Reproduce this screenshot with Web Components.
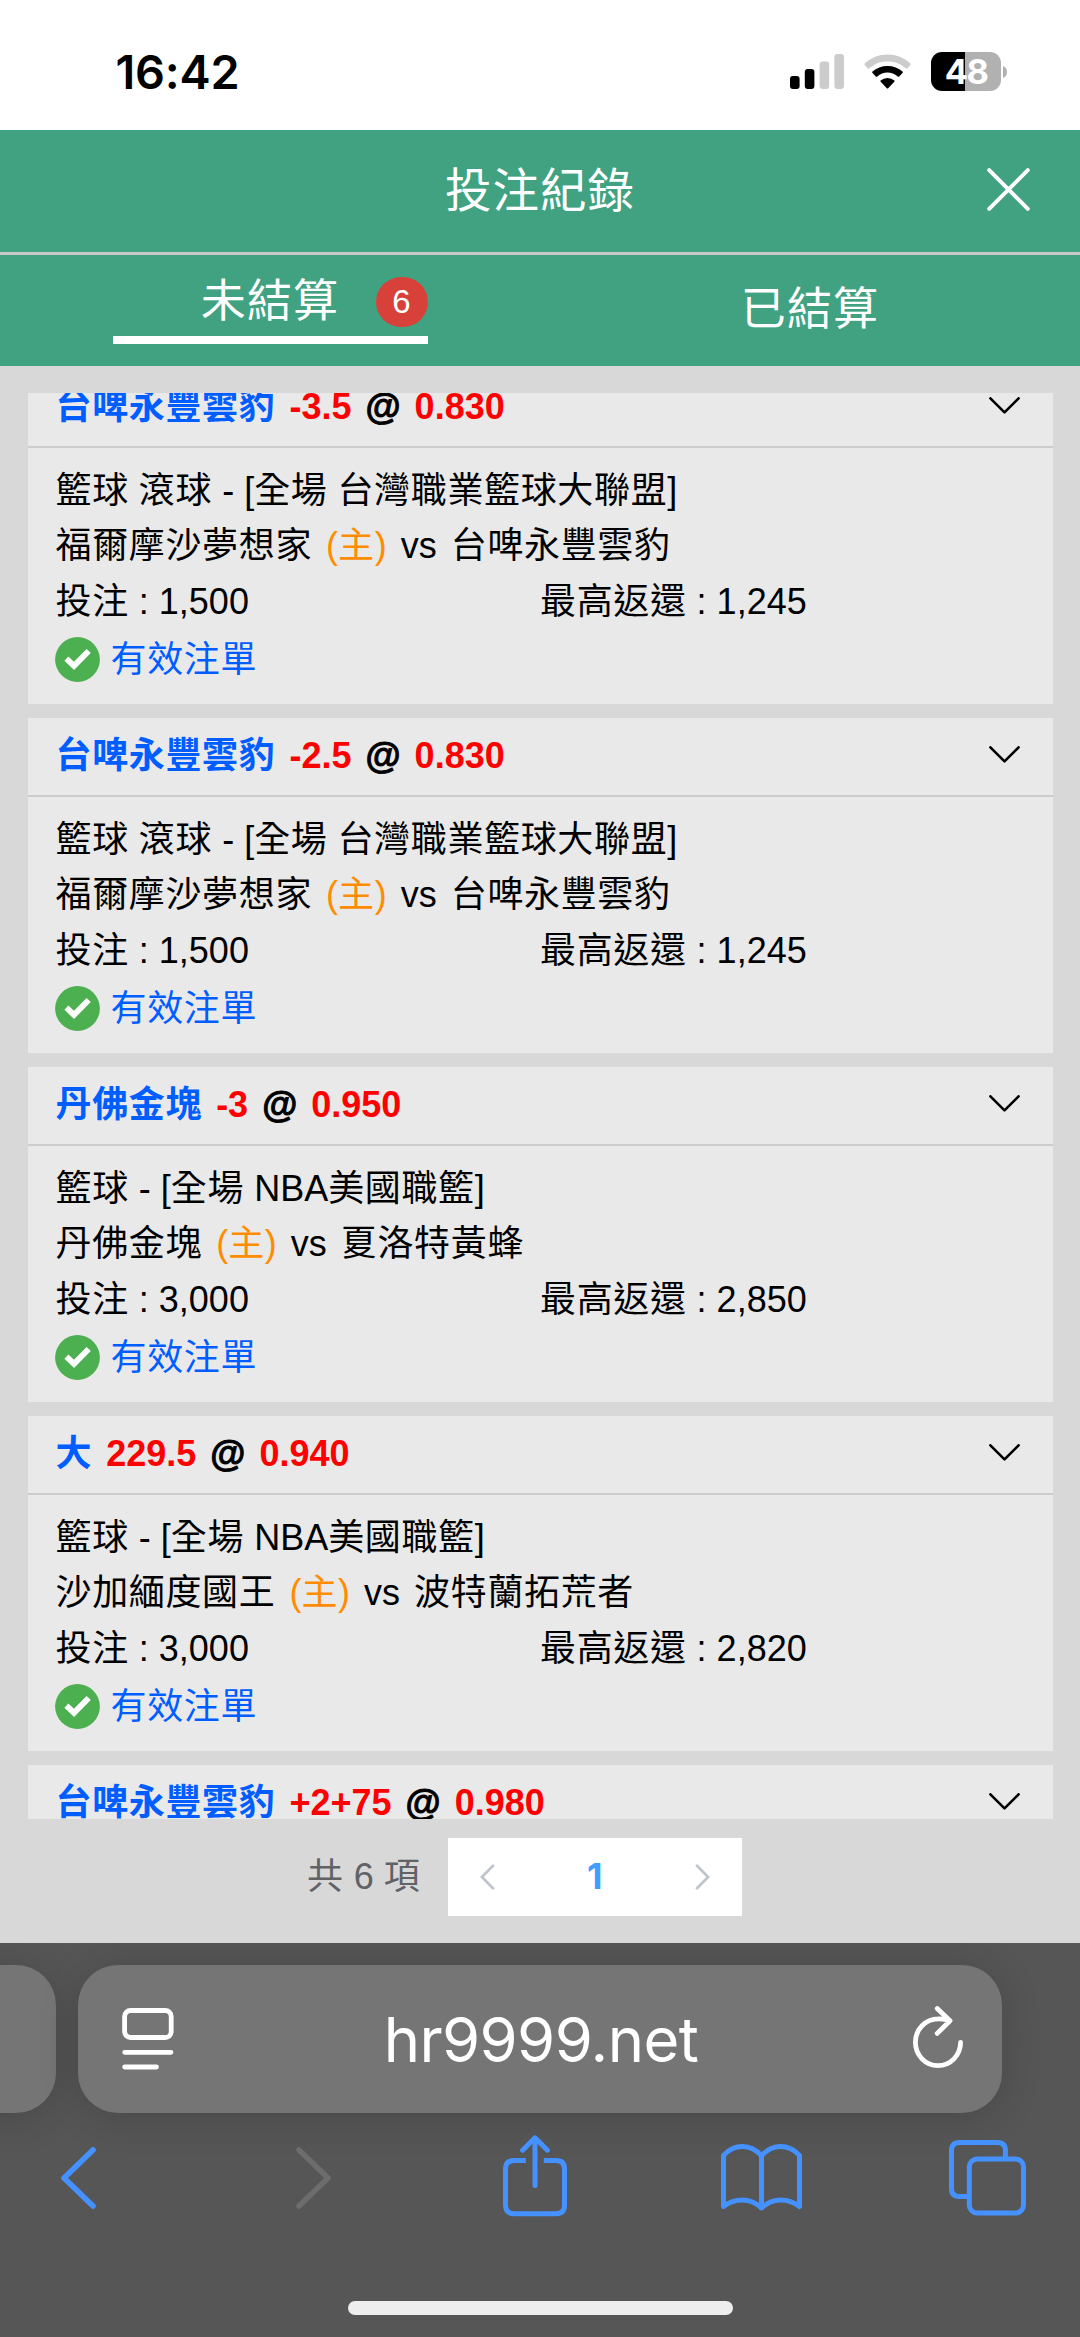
<!DOCTYPE html>
<html lang="zh-Hant">
<head>
<meta charset="utf-8">
<title>投注紀錄</title>
<style>
html,body{margin:0;padding:0}
body{width:1080px;height:2337px;overflow:hidden;background:#d8d8d8;font-family:"Liberation Sans","Noto Sans CJK TC",sans-serif}
</style>
</head>
<body>
<bet-app></bet-app>
<script>
// Wraps runs of Han characters so that only they get the extra tracking.
const han = s => s.replace(/[\u3400-\u9fff]+/g, m => `<span class="h">${m}</span>`);
const base = `<style>*{box-sizing:border-box}svg{display:block;flex:none}.h{letter-spacing:var(--track,.65px)}</style>`;
const define = (name, render) => customElements.define(name, class extends HTMLElement {
  connectedCallback() {
    if (this.shadowRoot) return;
    this.attachShadow({mode: 'open'}).innerHTML = base + render(this);
  }
});

define('status-bar', () => `
<style>
:host{display:flex;height:130px;background:#fff;align-items:flex-start;justify-content:space-between;padding:0 73px 0 115.5px;font-family:Inter,sans-serif}
.time{font-size:46.8px;font-weight:600;line-height:56px;margin-top:44px;letter-spacing:-.2px;color:#000}
.icons{display:flex;align-items:center;margin-top:52px;height:39px}
.sig{margin-right:20px}.wifi{margin-right:20px}
.bat{width:70px;height:39px;border-radius:11px;background:linear-gradient(90deg,#000 34.5px,#b1b1b1 34.5px);color:#fff;font-weight:700;font-size:34.5px;line-height:39px;text-align:center;letter-spacing:-1.6px}
.nub{margin-left:2px}
</style>
<div class="time">16:42</div>
<div class="icons">
<svg class="sig" width="54" height="35" viewBox="0 0 54 35"><rect y="22" width="9.6" height="13" rx="3"/><rect x="14.8" y="15" width="9.6" height="20" rx="3"/><rect x="29.6" y="7.5" width="9.6" height="27.5" rx="3" fill="#ccc"/><rect x="44.4" width="9.6" height="35" rx="3" fill="#ccc"/></svg>
<svg class="wifi" width="47" height="35" viewBox="0 0 47 35"><path d="M0.7 9.6Q0 10.4 .8 11.3L3.8 14.4Q4.5 15 5.3 14.3Q13.2 7.2 23.5 7.2Q33.8 7.2 41.7 14.3Q42.5 15 43.2 14.4L46.2 11.3Q47 10.4 46.3 9.6Q37 .4 23.5 .4Q10 .4 .7 9.6Z" fill="#ccc"/><path d="M8.4 17.6Q7.8 18.4 8.5 19.1L11.8 22.4Q12.5 23 13.3 22.4Q17.8 18.6 23.5 18.6Q29.2 18.6 33.7 22.4Q34.5 23 35.2 22.4L38.5 19.1Q39.2 18.4 38.6 17.6Q32.3 12 23.5 12Q14.7 12 8.4 17.6Z"/><path d="M16.6 26.4Q16 27.1 16.7 27.8L22.8 34.2Q23.5 34.9 24.2 34.2L30.3 27.8Q31 27.1 30.4 26.4Q27.5 23.9 23.5 23.9Q19.5 23.9 16.6 26.4Z"/></svg>
<div class="bat">48</div>
<svg class="nub" width="4" height="12" viewBox="0 0 4 12"><path d="M0 0Q4 1.6 4 6T0 12Z" fill="#b1b1b1"/></svg>
</div>`);

define('page-title', () => `
<style>
:host{display:grid;grid-template-columns:1fr auto 1fr;align-items:center;height:125px;background:#40a280;border-bottom:3px solid #c9c9c9;color:#fff;--track:1px}
.t{grid-column:2;font-size:46.5px;line-height:60px}
svg{justify-self:end;margin-right:50px;margin-bottom:4px}
</style>
<div class="t">${han('投注紀錄')}</div>
<svg width="43" height="43" viewBox="0 0 43 43" fill="none" stroke="#fff" stroke-width="4" stroke-linecap="round"><path d="M2.2 2.2L40.8 40.8M40.8 2.2L2.2 40.8"/></svg>`);

define('tab-item', el => `
<style>
:host{flex:1;display:flex;justify-content:center;color:#fff;--track:1.2px}
.b{position:relative;width:315px;height:${el.hasAttribute('active') ? 88.5 : 110}px;text-align:center;font-size:45px;line-height:60px;${el.hasAttribute('active') ? 'border-bottom:8.5px solid #fff;padding-top:17px' : 'padding-top:25px'}}
.n{position:absolute;right:0;top:22px;width:52px;height:50px;border-radius:26px;background:#d8413a;font-size:33px;line-height:50px}
</style>
<div class="b">${han(el.getAttribute('label'))}${el.hasAttribute('count') ? `<span class="n">${el.getAttribute('count')}</span>` : ''}</div>`);

define('tab-bar', () => `<style>:host{display:flex;height:110.5px;background:#40a280}</style><slot></slot>`);

const chevron = `<svg width="31" height="17" viewBox="0 0 31 17" fill="none" stroke="#000" stroke-width="2.6" stroke-linecap="round" stroke-linejoin="round"><path d="M1.4 1.3L15.5 15.4L29.6 1.3"/></svg>`;
const headCss = `
header{display:flex;align-items:center;justify-content:space-between;height:79px;padding:0 33px 1px 28px;font-weight:700;word-spacing:4px;border-bottom:2.8px solid #ccc}
.p{color:#005dff}.r{color:#f00}.at{-webkit-text-stroke:.9px #000}
header svg{margin-top:-4px}`;
const head = (pick, line, odds) => `<header><div><span class="p">${han(pick)}</span> <span class="r">${line}</span> <span class="at">@</span> <span class="r">${odds}</span></div>${chevron}</header>`;

define('bet-card', el => {
  const a = n => el.getAttribute(n);
  return `
<style>
:host{display:block;flex:none;height:335px;background:#e9e9e9;color:#000;font-size:36px;line-height:55.5px}
${headCss}
main{padding:14.5px 28px 0}
.teams{word-spacing:4px}.home{color:#ff8c00}
.row{display:grid;grid-template-columns:1fr 1fr}
.ok{display:flex;align-items:center;gap:11px;color:#005dff;margin-top:3px}
.ok svg{margin-left:-1px}
</style>
${head(a('pick'), a('line'), a('odds'))}
<main>
<div>${han(a('league'))}</div>
<div class="teams">${han(a('home'))} <span class="home">(${han('主')})</span> vs ${han(a('away'))}</div>
<div class="row"><div>${han('投注')} : ${a('stake')}</div><div>${han('最高返還')} : ${a('payout')}</div></div>
<div class="ok"><svg width="45" height="45" viewBox="0 0 45 45"><circle cx="22.5" cy="22.5" r="22.4" fill="#4caf50"/><path d="M11.4 21.6L19 28.9L33.7 14" fill="none" stroke="#fff" stroke-width="5.8"/></svg>${han('有效注單')}</div>
</main>`;
});

// The last entry is scrolled so that only its heading is inside the list.
define('bet-peek', () => `
<style>
:host{display:block;flex:none;background:#e9e9e9;font-size:36px;line-height:55.5px;color:#000}
${headCss}
</style>
${head('台啤永豐雲豹', '+2+75', '0.980')}`);

define('bet-list', () => `
<style>
:host{display:flex;flex-direction:column;justify-content:flex-start;gap:14px;height:1426px;margin:27.5px 27.5px 0;overflow:hidden}
::slotted(:first-child){margin-top:-24px}
</style><slot></slot>`);

define('page-nav', () => `
<style>
:host{display:flex;height:78px;margin:19px 0 0 307px;font-size:36px;line-height:77px;color:#606266}
.s{width:140.5px}
.box{display:grid;grid-template-columns:79px 136.5px 79px;justify-items:center;align-items:center;background:#fff;color:#409eff;height:77.5px}
.box span{font-family:Inter,sans-serif;font-weight:700}
</style>
<div class="s">${han('共')} 6 ${han('項')}</div>
<div class="box">
<svg width="15" height="26" viewBox="0 0 15 26" fill="none" stroke="#c0c4cc" stroke-width="2.7" stroke-linecap="round"><path d="M13 1.8L1.9 13L13 24.2"/></svg>
<span>1</span>
<svg width="15" height="26" viewBox="0 0 15 26" fill="none" stroke="#c0c4cc" stroke-width="2.7" stroke-linecap="round"><path d="M2 1.8L13.1 13L2 24.2"/></svg>
</div>`);

define('browser-bar', () => `
<style>
:host{display:flex;flex-direction:column;height:394px;margin-top:26.5px;background:#565656;overflow:hidden}
.tabs{display:flex;gap:22px;padding-top:22px;margin-left:-60px}
.side,.url{height:148px;border-radius:40px;background:#757575;box-shadow:0 4px 40px rgba(0,0,0,.16)}
.side{width:115.5px;flex:none}
.url{width:924.5px;display:flex;align-items:center;justify-content:space-between;padding:0 37.5px 0 44px;color:#fff;font:400 61.5px/76px Inter,sans-serif;letter-spacing:-.6px}
.url span{margin:2px 4px 0 0}
.tools{display:grid;grid-template-columns:157px 313px 130px 323px 129px;justify-items:center;align-items:center;margin-top:21px;height:88px;stroke:#4591ff;fill:none;stroke-width:5;stroke-linecap:round;stroke-linejoin:round}
.share{margin-top:-3px}
.home{width:385px;height:14px;border-radius:7px;background:#eee;margin:79px 0 0 348px}
</style>
<div class="tabs"><div class="side"></div>
<div class="url">
<svg width="52" height="62" viewBox="0 0 52 62" fill="none" stroke="#fff" stroke-width="4.8" stroke-linecap="round"><rect x="2.6" y="2.5" width="46.6" height="27" rx="6"/><path d="M2.7 44.3H49M2.7 59H34.5"/></svg>
<span>hr9999.net</span>
<svg width="52" height="66" viewBox="0 0 52 66" fill="none" stroke="#fff" stroke-width="4.8" stroke-linecap="round" stroke-linejoin="round"><path d="M48.6 36.3A22.6 23.4 0 1 1 26 12.9Q32 12.6 37 14.6M25.2 2.6L38 14.8L25.2 27.4"/></svg>
</div></div>
<div class="tools">
<svg width="35" height="62" viewBox="0 0 35 62" stroke-width="5.6"><path d="M32 2.9L3 31L32 59.1"/></svg>
<svg width="35" height="62" viewBox="0 0 35 62" stroke="#6c6c6c" stroke-width="5.6"><path d="M3 2.9L32 31L3 59.1"/></svg>
<svg class="share" width="64" height="82" viewBox="0 0 64 82"><path stroke-linecap="butt" d="M22.8 25.5H11Q2.5 25.5 2.5 34V70Q2.5 78.7 11 78.7H53Q61.5 78.7 61.5 70V34Q61.5 25.5 53 25.5H40.8"/><path d="M32 50.5V3M19.6 15.2L32 2.8L44.4 15.2"/></svg>
<svg width="81" height="67" viewBox="0 0 81 67"><path d="M40.5 11.8Q32 2.6 21.5 2.6Q10.5 2.6 2.5 11.5V62.5Q11 56 21.5 56Q32 56 40.5 64Q49 56 59.5 56Q70 56 78.5 62.5V11.5Q70.5 2.6 59.5 2.6Q49 2.6 40.5 11.8ZM40.5 11.8V64"/></svg>
<svg width="77" height="76" viewBox="0 0 77 76"><path stroke-linecap="butt" d="M56.4 18V10.5Q56.4 2.5 48.4 2.5H10.5Q2.5 2.5 2.5 10.5V48.5Q2.5 56.5 10.5 56.5H18"/><rect x="20.3" y="19" width="54.2" height="54" rx="8"/></svg>
</div>
<div class="home"></div>`);

const bets = [
  ['台啤永豐雲豹','-3.5','0.830','籃球 滾球 - [全場 台灣職業籃球大聯盟]','福爾摩沙夢想家','台啤永豐雲豹','1,500','1,245'],
  ['台啤永豐雲豹','-2.5','0.830','籃球 滾球 - [全場 台灣職業籃球大聯盟]','福爾摩沙夢想家','台啤永豐雲豹','1,500','1,245'],
  ['丹佛金塊','-3','0.950','籃球 - [全場 NBA美國職籃]','丹佛金塊','夏洛特黃蜂','3,000','2,850'],
  ['大','229.5','0.940','籃球 - [全場 NBA美國職籃]','沙加緬度國王','波特蘭拓荒者','3,000','2,820']
];
const keys = ['pick','line','odds','league','home','away','stake','payout'];

define('bet-app', () => `
<style>:host{display:flex;flex-direction:column;width:1080px;height:2337px;overflow:hidden;background:#d8d8d8}:host>*{flex:none}</style>
<status-bar></status-bar>
<page-title></page-title>
<tab-bar><tab-item label="未結算" count="6" active></tab-item><tab-item label="已結算"></tab-item></tab-bar>
<bet-list>${bets.map(b => `<bet-card ${keys.map((k, i) => `${k}="${b[i]}"`).join(' ')}></bet-card>`).join('')}<bet-peek></bet-peek></bet-list>
<page-nav></page-nav>
<browser-bar></browser-bar>`);
</script>
</body>
</html>
